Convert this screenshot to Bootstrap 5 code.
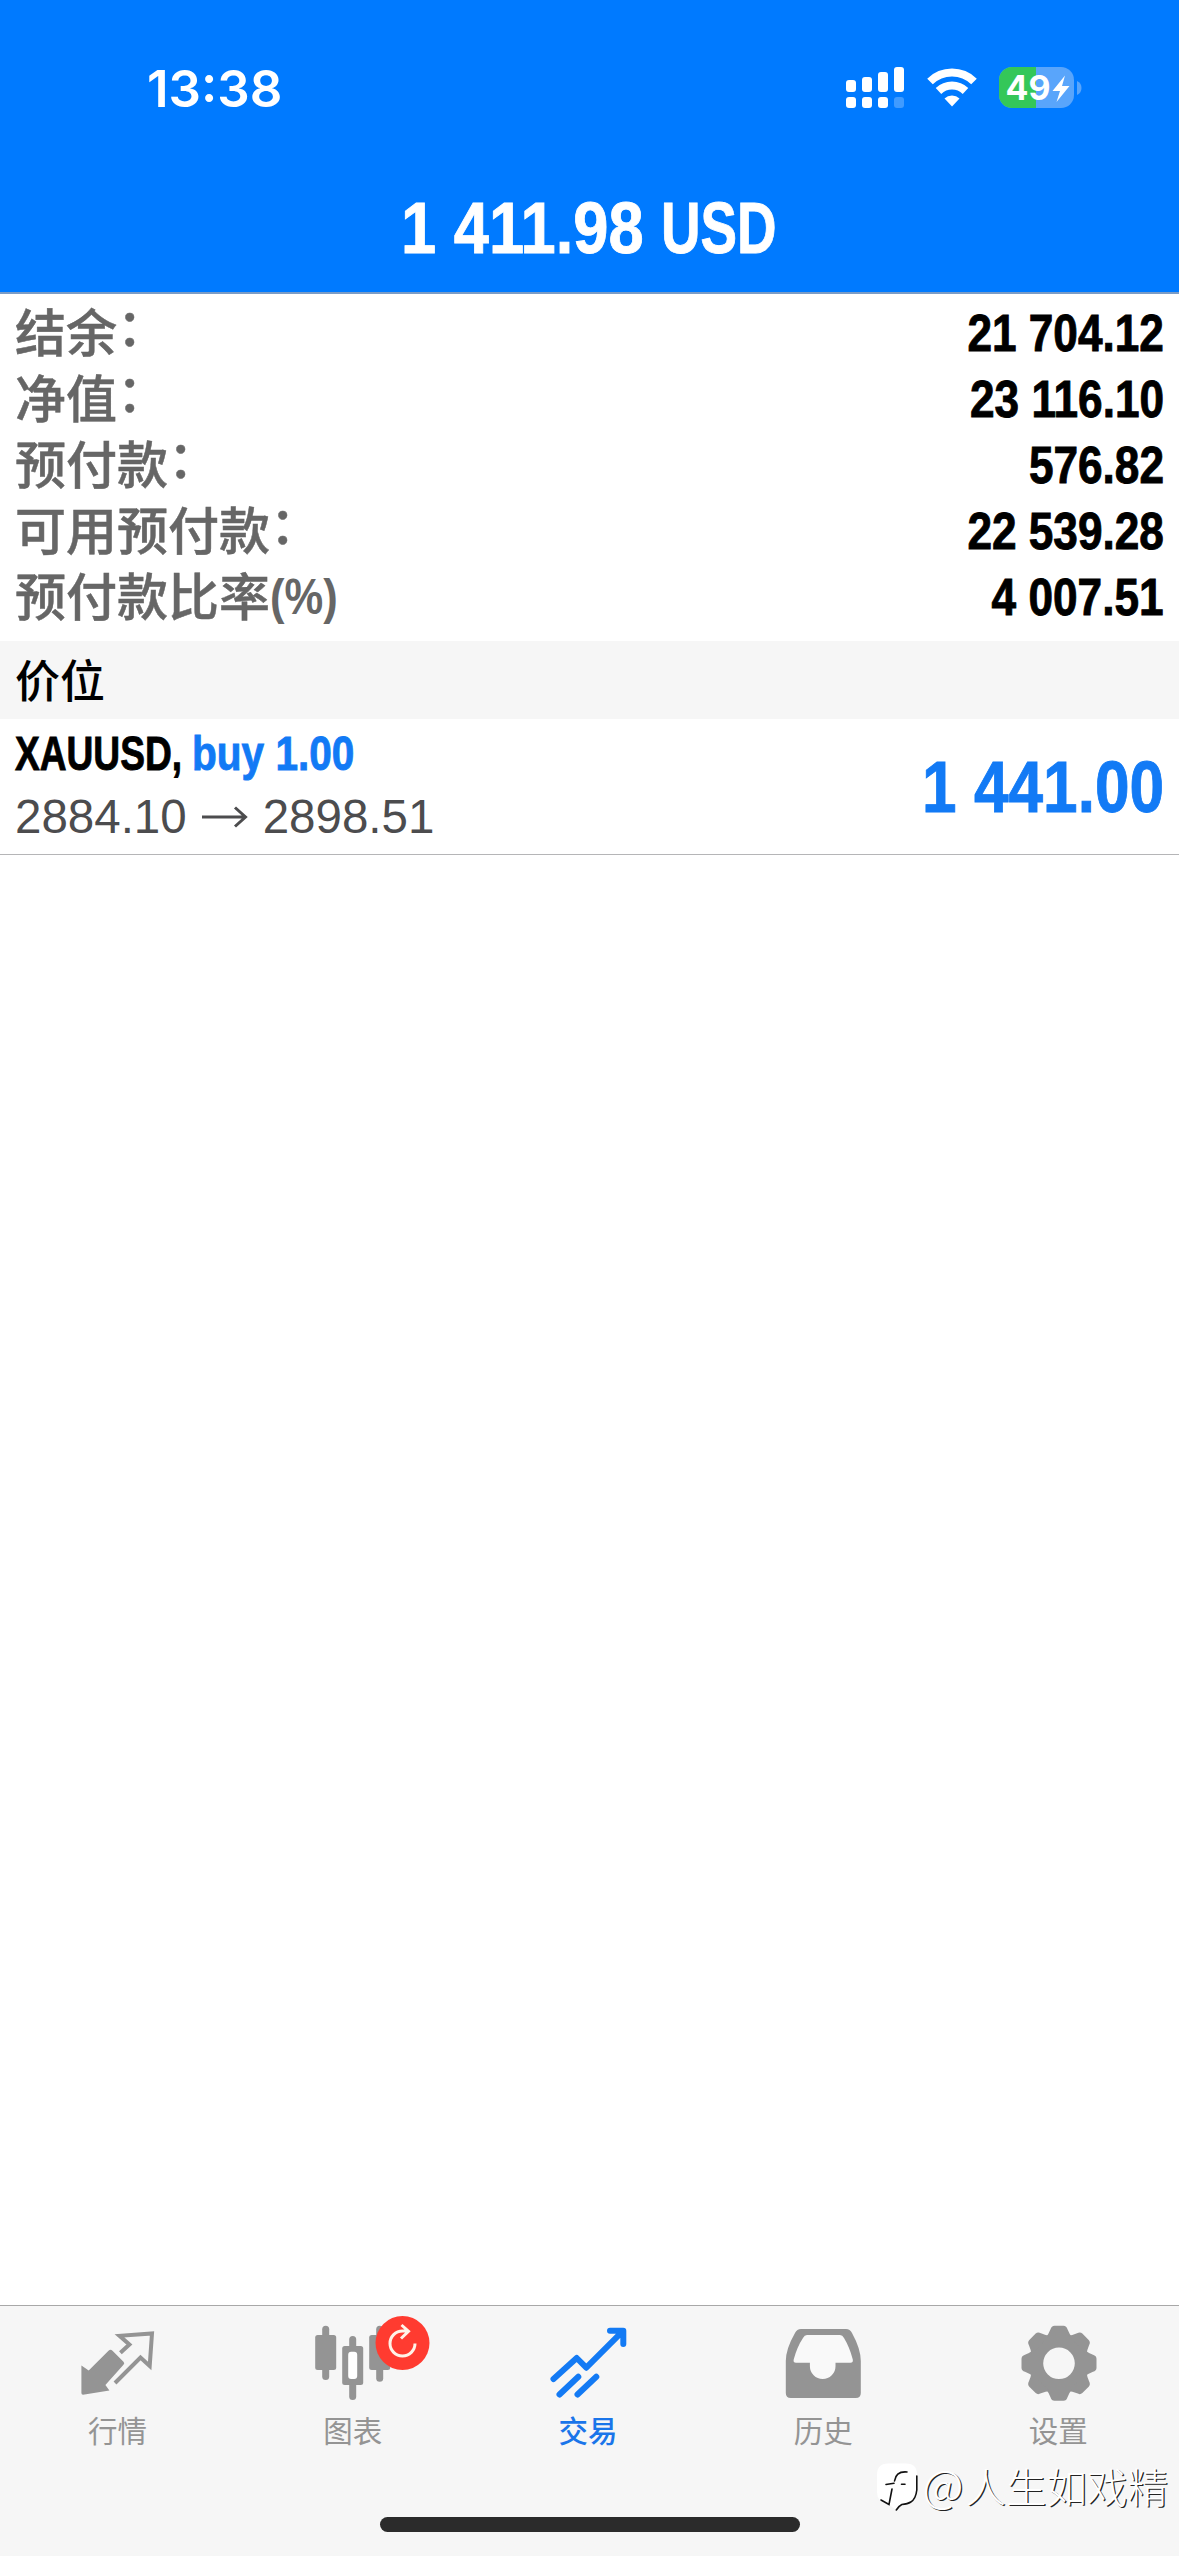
<!DOCTYPE html>
<html lang="zh-CN">
<head>
<meta charset="utf-8">
<meta name="viewport" content="width=device-width, initial-scale=1">
<title>交易</title>
<link href="https://cdn.jsdelivr.net/npm/bootstrap@5.3.0/dist/css/bootstrap.min.css" rel="stylesheet">
<style>
  :root { --blue: #007aff; --text-blue: #127af5; --bar: #f6f6f6; --icon: #949494; }
  body { font-family: "Liberation Sans", "Noto Sans CJK SC", sans-serif; color: #000; line-height: 1; background: #fff; }
  svg { display: block; flex: none; overflow: visible; }
  .screen { width: 1179px; height: 2556px; overflow: hidden; }
  .app-header { height: 294px; background: var(--blue); border-bottom: 2px solid #7b9cc6; }
  .status-bar { height: 176px; padding: 0 97px 0 147px; }
  .clock { font: 600 51px/51px Inter, sans-serif; }
  .status-icons { gap: 22.500px; }
  .cond { display: inline-block; font-weight: 700; white-space: pre; transform: scaleX(var(--sx, .866)); transform-origin: 0 50%; -webkit-text-stroke: .9px currentColor; }
  .cond-end { transform-origin: 100% 50%; }
  .total { font-size: 73px; line-height: 104px; padding-left: 401px; }
  .total-sum { width: 260px; --sx: .866; }
  .total-cur { --sx: .75; }
  .summary { padding: 5px 15px 12px; }
  .summary-row { height: 66px; }
  .summary-label { font: 500 51px/63px "Noto Sans CJK SC", sans-serif; color: #666; -webkit-text-stroke: .5px currentColor; }
  .colon { display: inline-block; height: 63px; line-height: 51px; vertical-align: top; }
  .unit { font-family: "Liberation Sans", sans-serif; font-size: 50px; line-height: 58px; width: 66px; --sx: .87; -webkit-text-stroke: 0; vertical-align: 2px; }
  .summary-value { font-size: 51px; line-height: 69px; }
  .section-head { height: 78px; padding: 0 15px; background: var(--bar); font: 500 45px/75px "Noto Sans CJK SC", sans-serif; }
  .position { height: 136px; padding: 0 15px; border-bottom: 1px solid #b5b5b7; }
  .pos-title { font-size: 48px; line-height: 60px; margin-top: -3px; margin-bottom: 3px; }
  .sym { width: 177px; --sx: .773; }
  .side { --sx: .845; color: var(--text-blue); }
  .pos-prices { font-size: 47.500px; line-height: 60px; color: #4c4c4e; gap: 15px; }
  .profit { font-size: 73px; line-height: 100px; color: var(--text-blue); --sx: .852; }
  .tabs { height: 251px; background: var(--bar); border-top: 1px solid #a8a8a8; padding-right: 3px; }
  .tab { width: 20%; color: var(--icon); font: 400 29.500px/36px "Noto Sans CJK SC", sans-serif; }
  .tab.active { color: #1a75ea; font-weight: 500; }
  .tab svg { margin-top: 1px; margin-bottom: 4px; }
  .home-bar { width: 420px; height: 15px; bottom: 24px; border-radius: 8px; background: #2b2b2b; }
  .watermark { right: 11px; bottom: 40px; color: #fff; font: 300 40.500px/60px "Noto Sans CJK SC", sans-serif; text-shadow: 1.200px 1.200px 0 #222; gap: 5px; }
  .at { font-size: 45px; margin-right: 2px; line-height: 50px; }
</style>
</head>
<body>
<div class="screen d-flex flex-column position-relative">
  <header class="app-header text-white">
    <div class="status-bar d-flex justify-content-between align-items-center">
      <div class="clock">13:38</div>
      <div class="status-icons d-flex align-items-center">
        <svg width="58" height="42" viewBox="0 0 58 42" fill="#fff">
          <rect x="0" y="13" width="10" height="12" rx="3"/><rect x="16" y="10" width="10" height="15" rx="3"/><rect x="32" y="5" width="10" height="20" rx="3"/><rect x="48" y="0" width="10" height="25" rx="3"/>
          <rect x="0" y="30" width="10" height="11" rx="3"/><rect x="16" y="30" width="10" height="11" rx="3"/><rect x="32" y="30" width="10" height="11" rx="3"/><rect x="48" y="30" width="10" height="11" rx="3" opacity=".25"/>
        </svg>
        <svg width="50" height="40" viewBox="0 0 50 40" fill="none" stroke="#fff" stroke-width="8">
          <path d="M3 13.500a31.500 31.500 0 0 1 44 0"/><path d="M11.500 23a19.500 19.500 0 0 1 27 0"/><path d="M25 38.500l-7.500-8a11 11 0 0 1 15 0z" fill="#fff" stroke="none"/>
        </svg>
        <svg width="83" height="42" viewBox="0 0 83 42">
          <defs><clipPath id="cell"><rect width="75" height="41" rx="13"/></clipPath></defs>
          <g clip-path="url(#cell)"><rect width="75" height="41" fill="#59a5fb"/><rect width="37" height="41" fill="#34c759"/></g>
          <path d="M78 14q4.500 2 4.500 7t-4.500 7z" fill="#59a5fb"/>
          <text x="6.500" y="33" font-family="Inter, sans-serif" font-weight="700" font-size="34" fill="#fff" textLength="45" lengthAdjust="spacingAndGlyphs">49</text>
          <path d="M66 8.500L53.500 24h7.500l-3.500 11L70.500 19H63z" fill="#fff"/>
        </svg>
      </div>
    </div>
    <div class="total d-flex"><span class="cond total-sum">1 411.98</span><span class="cond total-cur">USD</span></div>
  </header>

  <main class="flex-grow-1">
    <section class="summary">
      <div class="summary-row d-flex justify-content-between"><span class="summary-label">结余<span class="colon">：</span></span><span class="summary-value cond cond-end">21 704.12</span></div>
      <div class="summary-row d-flex justify-content-between"><span class="summary-label">净值<span class="colon">：</span></span><span class="summary-value cond cond-end">23 116.10</span></div>
      <div class="summary-row d-flex justify-content-between"><span class="summary-label">预付款<span class="colon">：</span></span><span class="summary-value cond cond-end">576.82</span></div>
      <div class="summary-row d-flex justify-content-between"><span class="summary-label">可用预付款<span class="colon">：</span></span><span class="summary-value cond cond-end">22 539.28</span></div>
      <div class="summary-row d-flex justify-content-between"><span class="summary-label">预付款比率<span class="cond unit">(%)</span></span><span class="summary-value cond cond-end">4 007.51</span></div>
    </section>
    <h2 class="section-head m-0">价位</h2>
    <div class="position d-flex justify-content-between align-items-center">
      <div>
        <div class="pos-title d-flex"><span class="cond sym">XAUUSD,</span><span class="cond side">buy 1.00</span></div>
        <div class="pos-prices d-flex align-items-center"><span>2884.10</span>
          <svg width="46" height="22" viewBox="0 0 46 22" fill="none" stroke="#4c4c4e" stroke-width="3"><path d="M0 11h43M33 1.500l10.500 9.500L33 20.500"/></svg>
          <span>2898.51</span></div>
      </div>
      <div class="cond cond-end profit">1 441.00</div>
    </div>
  </main>

  <nav class="tabs d-flex align-items-start">
    <a class="tab d-flex flex-column align-items-center text-decoration-none">
      <svg width="100" height="100" viewBox="0 0 100 100"><path d="M13.400 58.500l7.300 5L40.500 43.700q2-1.700 4 0l11 11q1.500 1.500 0 3L37.400 78l4 5.500L15 87.700q-1.600 0-1.600-1.700z" fill="currentColor"/><path d="M52.400 45.700l9-8.200-9.900-8.700L84 26.500l-2.300 32.500-9.200-8.500L47 76" fill="none" stroke="currentColor" stroke-width="4"/></svg>
      行情</a>
    <a class="tab d-flex flex-column align-items-center text-decoration-none">
      <svg width="100" height="100" viewBox="0 0 100 100" fill="currentColor">
        <rect x="12.200" y="28" width="21" height="35" rx="2.500"/><rect x="19.200" y="18.700" width="7" height="54.300" rx="3.500"/>
        <rect x="39.200" y="39" width="21" height="39" rx="2.500"/><rect x="46.200" y="29" width="7" height="64" rx="3.500"/><rect x="45.200" y="44.700" width="9" height="27.300" rx="3" fill="#fff"/>
        <rect x="66.200" y="28" width="21" height="35" rx="2.500"/><rect x="73.200" y="18.700" width="7" height="56" rx="3.500"/>
        <circle cx="99.500" cy="36" r="27" fill="#ff3b30"/>
        <path d="M112 36.500a12.500 12.500 0 1 1-12.500-12.500h5.500M98.500 18l7 6.200-7.500 7.300" fill="none" stroke="#fff3e8" stroke-width="3"/>
      </svg>
      图表</a>
    <a class="tab active d-flex flex-column align-items-center text-decoration-none">
      <svg width="100" height="100" viewBox="0 0 100 100" fill="none" stroke="#137af4" stroke-width="6" stroke-linecap="round" stroke-linejoin="round"><path d="M15.500 72L38.700 51l9.600 9.700 36.500-36.500M72 23.800h13.300v13.200M21.500 87.500l18.800-17.800M39.500 87.500l18.800-17.800"/></svg>
      交易</a>
    <a class="tab d-flex flex-column align-items-center text-decoration-none">
      <svg width="100" height="100" viewBox="0 0 100 100"><path d="M28 22h45q4 0 6 4 8.800 16 8.800 28v32q0 5-5 5h-65q-5 0-5-5V54q0-12 9.200-28 2-4 6-4z" fill="currentColor"/><path d="M34 28h33q2.500 0 4 3 5.500 9 8.800 21.500.500 3.200-2.300 3.200H62.500v3.500a12.800 12.800 0 0 1-25.600 0v-3.500H23q-3 0-2.300-3.200Q24 40 30 31q1.500-3 4-3z" fill="#f9f9f9"/></svg>
      历史</a>
    <a class="tab d-flex flex-column align-items-center text-decoration-none">
      <svg width="100" height="100" viewBox="0 0 100 100">
        <defs><path id="tooth" d="M-13-26Q-10.500-29-8.500-34-7.500-37.500-4.500-37.500H4.500Q7.500-37.500 8.500-34 10.500-29 13-26z"/></defs>
        <g transform="translate(51 56.300)" fill="currentColor">
          <circle r="22.600" fill="none" stroke="currentColor" stroke-width="13.600"/>
          <use href="#tooth"/><use href="#tooth" transform="rotate(45)"/><use href="#tooth" transform="rotate(90)"/><use href="#tooth" transform="rotate(135)"/><use href="#tooth" transform="rotate(180)"/><use href="#tooth" transform="rotate(225)"/><use href="#tooth" transform="rotate(270)"/><use href="#tooth" transform="rotate(315)"/>
        </g>
      </svg>
      设置</a>
  </nav>
  <div class="home-bar position-absolute start-50 translate-middle-x"></div>
  <div class="watermark position-absolute d-flex align-items-center">
    <svg width="42" height="49" viewBox="0 0 42 49" fill="none" stroke="#111" stroke-width="1.600" stroke-linecap="round">
      <path d="M12 1.500h18q11 0 11 11v16q0 10-8 12l-7 2-6 5.500-8-6q-11-2-11-12v-17q0-11.500 11-11.500z" fill="#fff" stroke="none"/>
      <path d="M31 10q-11-1-12.500 9M10 22.500l8-1.200M25.500 22.300h3.500M16 27l-3 15.500-8-4.500M40.800 14v14q-1 9-6 12-3 2-9 2.500-3 1.500-5.500 5.500"/>
    </svg>
    <span><span class="at">@</span>人生如戏精</span>
  </div>
</div>
<script src="https://cdn.jsdelivr.net/npm/bootstrap@5.3.0/dist/js/bootstrap.bundle.min.js"></script>
</body>
</html>
